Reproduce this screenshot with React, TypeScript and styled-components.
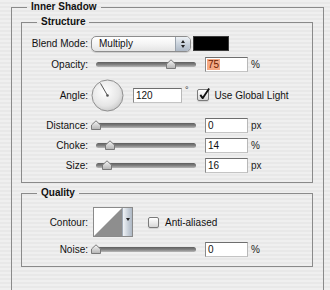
import React from 'react';
import styled, { createGlobalStyle } from 'styled-components';

const GlobalStyle = createGlobalStyle`
  html, body {
    margin: 0;
    padding: 0;
    overflow: hidden;
  }
  body {
    width: 330px;
    height: 290px;
    font-family: "Lucida Grande", "Liberation Sans", Arial, sans-serif;
    font-size: 10px;
    color: #111;
    background: repeating-linear-gradient(
      to bottom,
      #efefef 0,
      #efefef 2px,
      #e8e8e8 2px,
      #e8e8e8 4px
    );
  }
`;

// outer box runs off the bottom of the window, so it has no bottom edge
const Group = styled.fieldset<{ $outer?: boolean; $gap?: number }>`
  margin: ${(p) => (p.$outer ? '0 6px 0 11px' : `${p.$gap ?? 1}px 10px 0 9px`)};
  padding: 0;
  border: 1px solid #8a8a8a;
  min-width: 0;
  box-sizing: border-box;
  ${(p) => (p.$outer ? 'border-bottom: none; height: 290px;' : '')}
`;

const Legend = styled.legend`
  margin-left: 15px;
  padding: 0 4px;
  font-weight: bold;
  font-size: 10px;
  line-height: 14px;
  color: #111;
`;

const Body = styled.div<{ $top: number; $bottom: number }>`
  display: flex;
  flex-direction: column;
  padding: ${(p) => p.$top}px 0 ${(p) => p.$bottom}px 0;
`;

const Row = styled.div<{ $h: number; $mt?: number }>`
  display: flex;
  align-items: center;
  height: ${(p) => p.$h}px;
  margin-top: ${(p) => p.$mt ?? 0}px;
`;

const Label = styled.span`
  flex: none;
  width: 66px;
  text-align: right;
  white-space: nowrap;
`;

const Select = styled.div`
  display: flex;
  align-items: stretch;
  box-sizing: border-box;
  width: 100px;
  height: 16px;
  margin-left: 3px;
  border: 1px solid #8d8d8d;
  border-radius: 5px;
  overflow: hidden;
  background: linear-gradient(#ffffff, #f4f4f4 50%, #e4e4e4);
  box-shadow: 0 1px 1px rgba(0, 0, 0, 0.15);
  .value {
    flex: 1;
    padding-left: 7px;
    line-height: 14px;
  }
  .arrows {
    width: 14px;
    border-left: 1px solid #9aa3ad;
    background: linear-gradient(#eef2f6, #c9d2dc 50%, #aeb9c6);
    display: flex;
    flex-direction: column;
    align-items: center;
    justify-content: center;
    gap: 2px;
  }
`;

const Tri = styled.span<{ $down?: boolean }>`
  width: 0;
  height: 0;
  border-left: 2.5px solid transparent;
  border-right: 2.5px solid transparent;
  ${(p) => (p.$down ? 'border-top: 3px solid #222;' : 'border-bottom: 3px solid #222;')}
`;

const Swatch = styled.div`
  width: 36px;
  height: 15px;
  margin-left: 2px;
  box-sizing: border-box;
  background: #000;
  border: 1px solid #3a3a3a;
`;

const Track = styled.div`
  position: relative;
  flex: none;
  width: 100px;
  height: 5px;
  margin-left: 8px;
  border-radius: 3px;
  background: linear-gradient(#5e5e5e, #858585 55%, #b9b9b9);
`;

const ThumbSvg = styled.svg`
  position: absolute;
  top: -3px;
  width: 10px;
  height: 10px;
`;

const Field = styled.div<{ $w?: number; $ml?: number }>`
  flex: none;
  box-sizing: border-box;
  width: ${(p) => p.$w ?? 43}px;
  height: 15px;
  margin-left: ${(p) => p.$ml ?? 9}px;
  padding-left: 2px;
  line-height: 13px;
  background: #fff;
  border: 1px solid;
  border-color: #6e6e6e #b8b8b8 #c4c4c4 #8a8a8a;
  color: #111;
`;

const Selected = styled.span`
  background: #f5a985;
  color: #6a1c00;
  padding: 0 1px 0 1px;
  margin-left: -1px;
`;

const Unit = styled.span`
  margin-left: 3px;
  color: #222;
`;

const Degree = styled.span`
  align-self: flex-start;
  margin-top: 10px;
  margin-left: 3px;
  font-size: 9px;
  color: #333;
`;

const Check = styled.span<{ $size: number; $ml: number }>`
  position: relative;
  flex: none;
  box-sizing: border-box;
  width: ${(p) => p.$size}px;
  height: ${(p) => p.$size}px;
  margin-left: ${(p) => p.$ml}px;
  border: 1px solid #7b7b7b;
  border-radius: 2px;
  background: linear-gradient(#ffffff, #ececec 50%, #d6d6d6);
  box-shadow: 0 1px 1px rgba(0, 0, 0, 0.12);
  svg {
    position: absolute;
    left: 0;
    top: -3px;
    overflow: visible;
  }
`;

const CheckText = styled.span`
  margin-left: 6px;
  white-space: nowrap;
`;

const Dial = styled.svg`
  flex: none;
  margin-left: 3px;
  width: 33px;
  height: 33px;
`;

const Contour = styled.div`
  display: flex;
  flex: none;
  box-sizing: border-box;
  width: 40px;
  height: 30px;
  margin-left: 5px;
  border: 1px solid #8a8a8a;
  background: #fff;
  svg {
    display: block;
  }
  .drop {
    flex: 1;
    border-left: 1px solid #a2abb6;
    background: linear-gradient(to right, #f0f3f6, #c6ced8 60%, #aeb8c4);
    display: flex;
    justify-content: center;
    padding-top: 10px;
  }
`;

const Slider: React.FC<{ value: number }> = ({ value }) => (
  <Track>
    <ThumbSvg viewBox="0 0 10 10" style={{ left: value - 5 }}>
      <defs>
        <linearGradient id="thumbGrad" x1="0" y1="0" x2="0" y2="1">
          <stop offset="0" stopColor="#f6f6f6" />
          <stop offset="1" stopColor="#b4b4b4" />
        </linearGradient>
      </defs>
      <path d="M0.5 9.5 V5 L5 0.8 L9.5 5 V9.5 Z" fill="url(#thumbGrad)" stroke="#7a7a7a" strokeWidth="1" />
    </ThumbSvg>
  </Track>
);

const SliderRow: React.FC<{ label: string; value: number; text: React.ReactNode; unit: string; h: number }> = ({
  label,
  value,
  text,
  unit,
  h,
}) => (
  <Row $h={h}>
    <Label>{label}</Label>
    <Slider value={value} />
    <Field>{text}</Field>
    <Unit>{unit}</Unit>
  </Row>
);

const App: React.FC = () => {
  const angle = 120;
  const rad = (angle * Math.PI) / 180;
  const nx = 16.5 + 14 * Math.cos(rad);
  const ny = 16.5 - 14 * Math.sin(rad);

  return (
    <>
      <GlobalStyle />
      <Group $outer>
        <Legend>Inner Shadow</Legend>
        <Group>
          <Legend>Structure</Legend>
          <Body $top={5} $bottom={7}>
            <Row $h={19}>
              <Label>Blend Mode:</Label>
              <Select>
                <span className="value">Multiply</span>
                <span className="arrows">
                  <Tri />
                  <Tri $down />
                </span>
              </Select>
              <Swatch />
            </Row>
            <SliderRow label="Opacity:" value={75} text={<Selected>75</Selected>} unit="%" h={22} />
            <Row $h={40}>
              <Label>Angle:</Label>
              <Dial viewBox="0 0 33 33">
                <defs>
                  <radialGradient id="dialGrad" cx="0.42" cy="0.38" r="0.65">
                    <stop offset="0" stopColor="#ffffff" />
                    <stop offset="0.7" stopColor="#e6e6e6" />
                    <stop offset="1" stopColor="#c9c9c9" />
                  </radialGradient>
                </defs>
                <circle cx="16.5" cy="16.5" r="15.5" fill="url(#dialGrad)" stroke="#8f8f8f" strokeWidth="1" />
                <line x1="16.5" y1="16.5" x2={nx} y2={ny} stroke="#555" strokeWidth="1" />
                <circle cx="16.5" cy="16.5" r="1.3" fill="#555" />
              </Dial>
              <Field $w={49} $ml={9}>
                {angle}
              </Field>
              <Degree>°</Degree>
              <Check $size={12} $ml={8}>
                <svg width="13" height="13" viewBox="0 0 14 14">
                  <path d="M2.5 8.5 L5 12 L12 1.5" fill="none" stroke="#111" strokeWidth="2" strokeLinejoin="round" />
                </svg>
              </Check>
              <CheckText>Use Global Light</CheckText>
            </Row>
            <SliderRow label="Distance:" value={0} text="0" unit="px" h={20} />
            <SliderRow label="Choke:" value={14} text="14" unit="%" h={20} />
            <SliderRow label="Size:" value={11} text="16" unit="px" h={20} />
          </Body>
        </Group>
        <Group $gap={3}>
          <Legend>Quality</Legend>
          <Body $top={7} $bottom={9}>
            <Row $h={30}>
              <Label>Contour:</Label>
              <Contour>
                <svg width="28" height="28" viewBox="0 0 28 28">
                  <polygon points="0,28 28,0 28,28" fill="#8e8e8e" />
                </svg>
                <span className="drop">
                  <Tri $down />
                </span>
              </Contour>
              <Check $size={11} $ml={15} />
              <CheckText>Anti-aliased</CheckText>
            </Row>
            <Row $h={16} $mt={4}>
              <Label>Noise:</Label>
              <Slider value={0} />
              <Field>0</Field>
              <Unit>%</Unit>
            </Row>
          </Body>
        </Group>
      </Group>
    </>
  );
};

export default App;
